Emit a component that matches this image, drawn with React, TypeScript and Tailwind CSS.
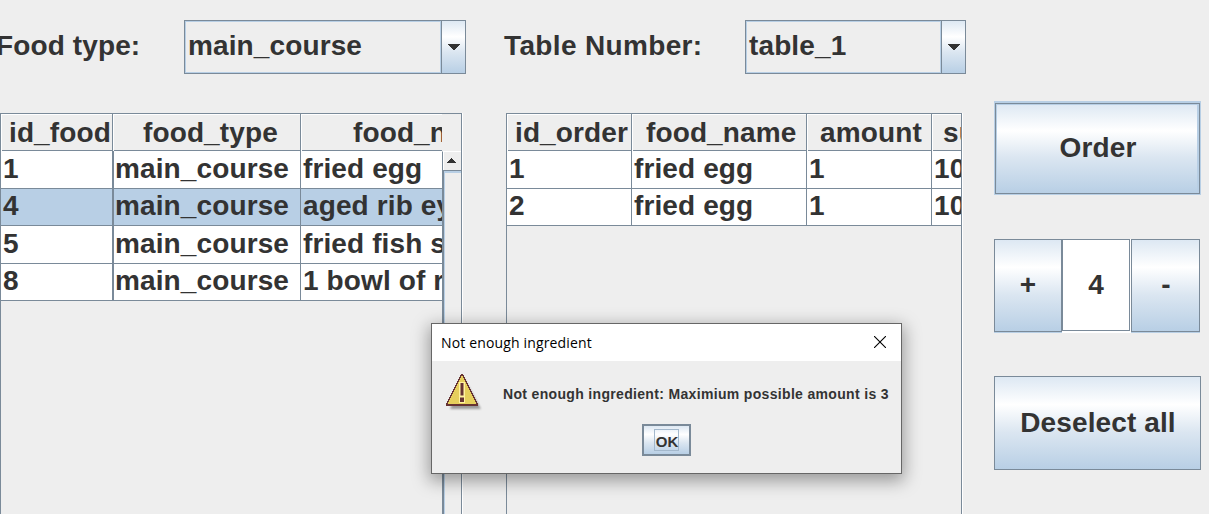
import type { ReactNode } from "react";

const GRADIENT =
  "bg-[linear-gradient(180deg,#dde8f3_0%,#ffffff_30%,#dbe6f1_60%,#b8cfe5_100%)]";

function Combo({ value, className }: { value: string; className: string }) {
  return (
    <div className={`flex h-[54px] shrink-0 border border-[#7a8a99] ${className}`}>
      <div className="flex flex-1 items-center border border-[#b8cfe5] pb-[2px] pl-[2px]">{value}</div>
      <div className={`flex w-[24px] items-center justify-center border-l border-[#7a8a99] ${GRADIENT}`}>
        <svg width="12" height="6" viewBox="0 0 12 6" shapeRendering="crispEdges">
          <path d="M0 0h12v1h-1v1h-1v1h-1v1h-1v1h-1v1h-2v-1h-1v-1h-1v-1h-1v-1h-1v-1h-1z" fill="#333" />
        </svg>
      </div>
    </div>
  );
}

type Column = { title: string; width: string; align: string; line: string };

function Table({ columns, rows, selected }: { columns: Column[]; rows: string[][]; selected?: number }) {
  return (
    <div className="flex flex-col">
      <div className="flex h-[37px]">
        {columns.map((c) => (
          <div key={c.title} className={`flex shrink-0 border-r border-[#7a8a99] ${c.width}`}>
            <div className="w-px bg-white" />
            <div className={`flex flex-1 items-center border-t border-b border-t-white border-b-[#7a8a99] pt-px ${c.align}`}>
              {c.title}
            </div>
          </div>
        ))}
      </div>
      {rows.map((row, i) => (
        <div
          key={i}
          className={`flex border-b border-[#7a8a99] ${i % 2 ? "h-[37px]" : "h-[38px]"} ${i === selected ? "bg-[#b8cfe5]" : "bg-white"}`}
        >
          {row.map((cell, j) => (
            <div
              key={j}
              className={`flex shrink-0 items-center pb-[2px] pl-[2px] border-[#7a8a99] ${columns[j].width} ${columns[j].line}`}
            >
              {cell}
            </div>
          ))}
        </div>
      ))}
    </div>
  );
}

function Button({ children, className }: { children: ReactNode; className: string }) {
  return (
    <button className={`flex shrink-0 items-center justify-center border border-[#7a8a99] ${GRADIENT} ${className}`}>
      {children}
    </button>
  );
}

const foodColumns: Column[] = [
  { title: "id_food", width: "w-[112px]", align: "pl-[7px]", line: "border-r" },
  { title: "food_type", width: "w-[188px]", align: "pl-[29px]", line: "border-l border-r pl-px!" },
  { title: "food_name", width: "w-[260px]", align: "pl-[51px]", line: "border-r" },
];
const foodRows = [
  ["1", "main_course", "fried egg"],
  ["4", "main_course", "aged rib eye"],
  ["5", "main_course", "fried fish soup"],
  ["8", "main_course", "1 bowl of rice"],
];
const orderColumns: Column[] = [
  { title: "id_order", width: "w-[125px]", align: "pl-[7px]", line: "border-r" },
  { title: "food_name", width: "w-[175px]", align: "pl-[13px]", line: "border-r" },
  { title: "amount", width: "w-[125px]", align: "pl-[12px]", line: "border-r" },
  { title: "sum", width: "w-[125px]", align: "pl-[10px]", line: "border-r" },
];
const orderRows = [
  ["1", "fried egg", "1", "10"],
  ["2", "fried egg", "1", "10"],
];

function WarningIcon() {
  return (
    <svg width="40" height="40" viewBox="0 0 40 40">
      <defs>
        <filter id="soft" x="-20%" y="-20%" width="140%" height="140%">
          <feGaussianBlur stdDeviation="1.3" />
        </filter>
      </defs>
      <path d="M18 4L35 35H4z" fill="#000" opacity=".35" filter="url(#soft)" />
      <path d="M15 0.500h2L31.500 31H0.500z" fill="#e6cf5c" />
      <path d="M15.500 0.500L0.500 30.500M16.500 0.500L31.500 30.500" stroke="#663333" strokeWidth="1.2" fill="none" shapeRendering="crispEdges" />
      <path d="M0 30h32v2H0z" fill="#663333" />
      <path d="M13 8h6v21h-6z" fill="#fff2a0" />
      <path d="M14.500 9h3v12.500h-3zM14 23.500h4v4.500h-4z" fill="#663333" />
    </svg>
  );
}

function Dialog() {
  return (
    <div className="absolute top-[323px] left-[431px] flex h-[151px] w-[471px] flex-col border border-[#666] bg-[#eee] tracking-normal shadow-[0_5px_16px_2px_rgba(0,0,0,0.36)]">
      <div className="flex h-[37px] shrink-0 items-center justify-between bg-white pr-[15px] pl-[9px]">
        <span className="font-['Open_Sans',sans-serif] text-[14px] font-normal tracking-[0.15px] text-black">
          Not enough ingredient
        </span>
        <svg width="12" height="12" viewBox="0 0 12 12" className="-mt-px">
          <path d="M0 0l12 12M12 0L0 12" stroke="#000" strokeWidth="1.1" />
        </svg>
      </div>
      <div className="flex h-[63px] shrink-0 pt-[13px] pl-[14px]">
        <WarningIcon />
        <span className="mt-[11px] ml-[17px] text-[14px] leading-[18px] tracking-[0.33px] whitespace-nowrap">
          Not enough ingredient: Maximium possible amount is 3
        </span>
      </div>
      <div className="flex pl-[210px]">
        <button className={`flex h-8 w-[49px] items-center justify-center border-2 border-[#7a8a99] ${GRADIENT}`}>
          <span className="flex h-[22px] w-[25px] items-center justify-center border border-[#a3b8cc] pt-[2px] pl-px text-[15px] leading-none">
            OK
          </span>
        </button>
      </div>
    </div>
  );
}

export default function App() {
  return (
    <main className="relative flex h-[514px] w-[1209px] overflow-hidden bg-[#eee] font-['Liberation_Sans',sans-serif] text-[28px] leading-none font-bold tracking-[0.12px] whitespace-nowrap text-[#333]">
      <div className="flex w-[966px] shrink-0 flex-col pt-5">
        <div className="flex shrink-0 items-center">
          <span className="-ml-[4px] w-[188px] pb-[2px]">Food type:</span>
          <Combo value="main_course" className="w-[282px]" />
          <span className="w-[279px] pb-[2px] pl-[38px] tracking-[0.35px]">Table Number:</span>
          <Combo value="table_1" className="w-[221px]" />
        </div>
        <div className="mt-[39px] flex flex-1 gap-[43px]">
          <section className="flex h-[420px] w-[463px] overflow-hidden border-r border-white">
            <div className="flex w-[462px] border-t border-r border-l border-[#7a8a99]">
              <div className="w-[441px] shrink-0 overflow-hidden">
                <Table columns={foodColumns} rows={foodRows} selected={1} />
              </div>
              <div className="flex flex-1 flex-col pt-[37px]">
                <div className="flex h-5 shrink-0 items-center justify-center border-t border-b border-l border-t-white border-b-[#7a8a99] border-l-[#7a8a99] pr-[2px] pb-[2px] shadow-[inset_1px_0_0_#fff]">
                  <svg width="9" height="5" viewBox="0 0 9 5" shapeRendering="crispEdges">
                    <path d="M4 0h1v1h1v1h1v1h1v1h1v1H0V4h1V3h1V2h1V1h1z" fill="#333" />
                  </svg>
                </div>
                <div className="flex-1 border-l-2 border-[#7a8a99] shadow-[inset_1px_2px_0_#b8cfe5]" />
              </div>
            </div>
          </section>
          <section className="flex h-[420px] w-[457px] overflow-hidden border-r border-white">
            <div className="w-[456px] overflow-hidden border-t border-r border-l border-[#7a8a99]">
              <Table columns={orderColumns} rows={orderRows} />
            </div>
          </section>
        </div>
      </div>

      <aside className="flex flex-col pt-[101px] pl-[28px]">
        <div className="flex h-[94px] w-[207px] border border-t-2 border-[#b8cfe5]">
          <Button className="flex-1 pb-[2px] pl-px shadow-[inset_1px_1px_0_#b8cfe5,inset_-2px_0_0_#b8cfe5]">Order</Button>
        </div>
        <div className="mt-[44px] flex h-[94px]">
          <Button className="h-[93px] w-[68px] pb-[2px] shadow-[0_1px_0_#b8cfe5]">+</Button>
          <div className="flex w-[69px] border-r border-b-2 border-white bg-white">
            <div className="flex flex-1 items-center justify-center border border-[#7a8a99]">4</div>
          </div>
          <Button className="h-[93px] w-[69px] pb-[2px] pl-px shadow-[0_1px_0_#b8cfe5]">-</Button>
        </div>
        <Button className="mt-[43px] h-[94px] w-[207px] pl-px">Deselect all</Button>
      </aside>

      <Dialog />
    </main>
  );
}
